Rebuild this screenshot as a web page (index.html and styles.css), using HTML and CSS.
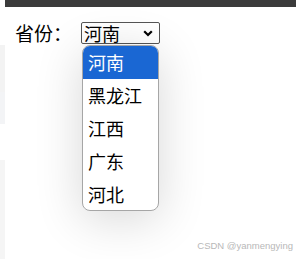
FILE: index.html
```html
<!DOCTYPE html>
<html lang="zh">
<head>
<meta charset="utf-8">
<link rel="stylesheet" href="styles.css">
</head>
<body>
<div class="topbar"></div>
<div class="page">
  <div class="side">
    <div class="strip s1"></div>
    <div class="strip s2"></div>
    <div class="strip s3"></div>
    <div class="strip s4"></div>
  </div>
  <div class="content">
    <div class="row">
      <span class="label">省份：</span>
      <div class="select">
        <span class="value">河南</span>
        <svg class="chev" width="10" height="7" viewBox="0 0 10 7"><path d="M1.2 1.2 L5 5 L8.8 1.2" fill="none" stroke="#000" stroke-width="2.2"/></svg>
      </div>
    </div>
  </div>
</div>
<div class="dropdown">
  <div class="opt active">河南</div>
  <div class="opt">黑龙江</div>
  <div class="opt">江西</div>
  <div class="opt">广东</div>
  <div class="opt">河北</div>
</div>
<div class="watermark">CSDN @yanmengying</div>
</body>
</html>
```
FILE: styles.css
```css
html, body {
  margin: 0;
  padding: 0;
  width: 296px;
  height: 259px;
  overflow: hidden;
  background: #fff;
  font-family: "Noto Sans CJK SC", "Noto Sans", sans-serif;
}
.topbar {
  margin-left: 5px;
  height: 7px;
  background: #3b3b3b;
}
.page {
  display: flex;
  height: 252px;
}
.side {
  width: 5px;
  display: flex;
  flex-direction: column;
  padding-top: 38px;
}
.strip.s1 { height: 47px; background: #f3f3f3; }
.strip.s2 { height: 32px; background: #f3f4f6; }
.strip.s3 { height: 36px; background: #fff; }
.strip.s4 { flex: 1; background: #f5f5f5; }
.content {
  flex: 1;
  padding: 15px 0 0 10px;
}
.row {
  display: flex;
  align-items: center;
  gap: 9px;
}
.label {
  font-size: 19px;
  line-height: 22px;
  color: #000;
}
.select {
  box-sizing: border-box;
  width: 79px;
  height: 22px;
  border: 1px solid #555;
  border-radius: 2px;
  display: flex;
  align-items: center;
  justify-content: space-between;
  padding: 0 6px 0 2px;
}
.value {
  font-size: 18px;
  line-height: 20px;
}
.chev { display: block; }
.dropdown {
  position: absolute;
  left: 82px;
  top: 45px;
  width: 77px;
  height: 166px;
  box-sizing: border-box;
  border: 1px solid #a6a6a6;
  border-radius: 8px;
  background: #fff;
  overflow: hidden;
  box-shadow: 0 8px 48px rgba(0, 0, 0, 0.16);
}
.opt {
  height: 33px;
  line-height: 33px;
  padding-left: 5px;
  font-size: 18px;
  color: #000;
}
.opt.active {
  background: #1a67d3;
  color: #fff;
}
.watermark {
  position: absolute;
  right: 3px;
  bottom: 8px;
  font-family: "Liberation Sans", Arial, sans-serif;
  font-size: 9.5px;
  color: #b8b8b8;
}
```
